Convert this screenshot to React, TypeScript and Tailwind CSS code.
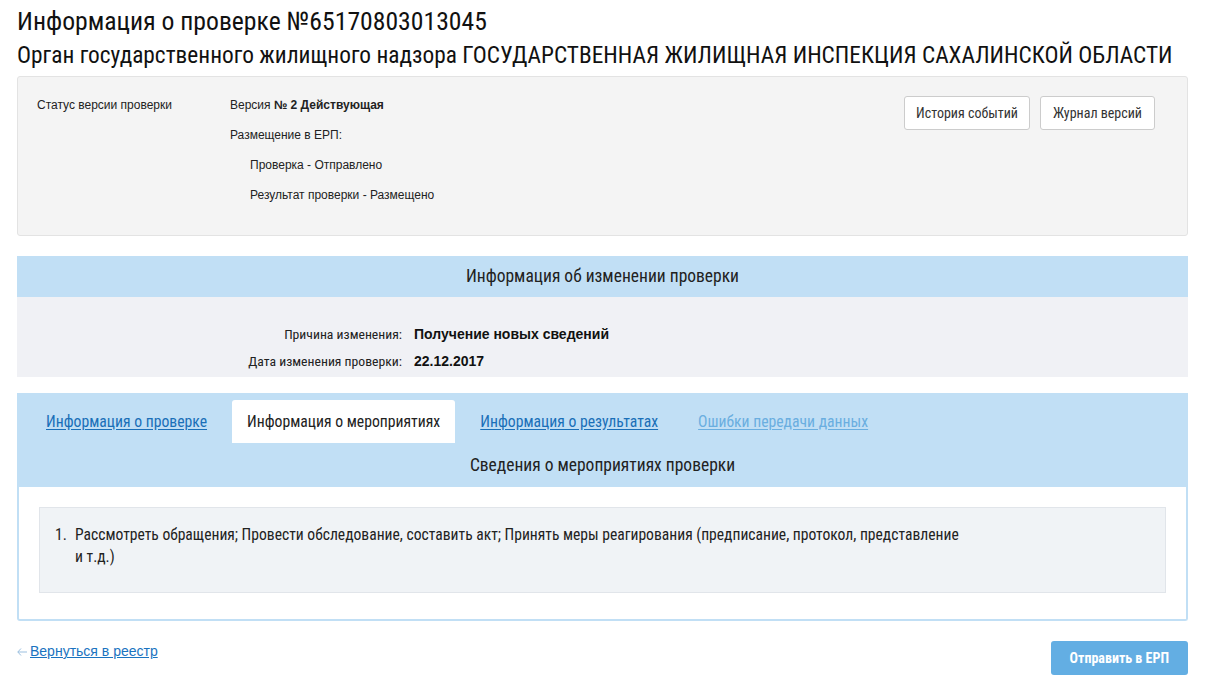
const cond = "font-['Roboto_Condensed','Liberation_Sans_Narrow','DejaVu_Sans_Condensed',Roboto,sans-serif]";
const arial = "font-['Liberation_Sans',Arial,sans-serif]";

function TopBox() {
  return (
    <div className="mx-[17px] flex h-[160px] rounded-[3px] border border-[#e3e3e3] bg-[#f4f4f4] pt-[21px]">
      <div className={`${arial} w-[212px] pl-[19px] text-[12px] leading-[14px] text-[#222]`}>
        Статус версии проверки
      </div>
      <div className={`${arial} flex flex-1 flex-col gap-[16px] text-[12px] leading-[14px] text-[#222]`}>
        <div>
          Версия <b>№ 2 Действующая</b>
        </div>
        <div>Размещение в ЕРП:</div>
        <div className="pl-[20px]">Проверка - Отправлено</div>
        <div className="pl-[20px]">Результат проверки - Размещено</div>
      </div>
      <div className={`${cond} flex items-start gap-[10px] pr-[32px]`}>
        <button className="-mt-[2px] h-[34px] rounded-[3px] border border-[#cccccc] bg-white px-[11px] text-[14px] text-[#333]">
          История событий
        </button>
        <button className="-mt-[2px] h-[34px] rounded-[3px] border border-[#cccccc] bg-white px-[12px] text-[14px] text-[#333]">
          Журнал версий
        </button>
      </div>
    </div>
  );
}

function ChangeInfo() {
  return (
    <div className="mx-[17px] mt-[20px]">
      <div className={`${cond} flex h-[41px] items-center justify-center bg-[#c1dff5] text-[17.5px] text-[#222]`}>
        Информация об изменении проверки
      </div>
      <div className="flex h-[80px] flex-col gap-[11px] bg-[#f0f1f5] pt-[29px]">
        <div className="flex items-center text-[14px] leading-[16px]">
          <span className={`${cond} w-[385px] text-right text-[13.7px] text-[#222]`}>Причина изменения:</span>
          <span className={`${arial} pl-[12px] font-bold text-[#111]`}>Получение новых сведений</span>
        </div>
        <div className="flex items-center text-[14px] leading-[16px]">
          <span className={`${cond} w-[385px] text-right text-[13.7px] text-[#222]`}>Дата изменения проверки:</span>
          <span className={`${arial} pl-[12px] font-bold text-[#111]`}>22.12.2017</span>
        </div>
      </div>
    </div>
  );
}

function Tabs() {
  return (
    <div className="mx-[17px] mt-[16px]">
      <div className={`${cond} bg-[#c1dff5] pt-[7px]`}>
        <div className="flex items-center pl-[29px] text-[15.7px]">
          <a className="text-[#1a6fb8] underline underline-offset-2" href="#">
            Информация о проверке
          </a>
          <span className="ml-[25px] flex h-[43px] items-center rounded-t-[3px] bg-white px-[15px] text-[#222]">
            Информация о мероприятиях
          </span>
          <a className="ml-[25px] text-[#1a6fb8] underline underline-offset-2" href="#">
            Информация о результатах
          </a>
          <a className="ml-[40px] text-[#6aaee0] underline underline-offset-2" href="#">
            Ошибки передачи данных
          </a>
        </div>
        <div className="flex h-[44px] items-center justify-center text-[17.5px] text-[#222]">
          Сведения о мероприятиях проверки
        </div>
      </div>
      <div className="rounded-b-[3px] border-2 border-t-0 border-[#c1dff5] bg-white px-[20px] pt-[20px] pb-[26px]">
        <div className={`${cond} h-[86px] border border-[#e1e5ea] bg-[#f0f3f6] pl-[15px] pt-[16px] text-[15.6px] leading-[22px] text-[#222]`}>
          <div className="flex">
            <span className="w-[20px] shrink-0">1.</span>
            <span className="max-w-[893px]">
              Рассмотреть обращения; Провести обследование, составить акт; Принять меры реагирования (предписание, протокол, представление и т.д.)
            </span>
          </div>
        </div>
      </div>
    </div>
  );
}

export default function App() {
  return (
    <div className="min-h-[686px] w-[1205px] bg-white pb-[10px]">
      <div className={`${cond} px-[17px] pt-[6px] text-[#111]`}>
        <h1 className="text-[25.7px] leading-[30px]">Информация о проверке №65170803013045</h1>
        <h2 className="mt-[4px] text-[23.35px] leading-[30px]">
          Орган государственного жилищного надзора ГОСУДАРСТВЕННАЯ ЖИЛИЩНАЯ ИНСПЕКЦИЯ САХАЛИНСКОЙ ОБЛАСТИ
        </h2>
      </div>
      <div className="mt-[6px]">
        <TopBox />
      </div>
      <ChangeInfo />
      <Tabs />
      <div className="mx-[17px] mt-[20px] flex items-start justify-between">
        <a href="#" className={`${arial} mt-[2px] flex items-center text-[14px] leading-[16px] text-[#1a73c0]`}>
          <svg width="10" height="8" viewBox="0 0 10 8" className="mr-[3px] mt-[1px]">
            <path d="M4 0.5 L0.8 4 L4 7.5 M0.8 4 H10" fill="none" stroke="#9bbfdf" strokeWidth="1" />
          </svg>
          <span className="underline">Вернуться в реестр</span>
        </a>
        <button className={`${cond} h-[34px] rounded-[3px] bg-[#63aee3] px-[19px] text-[14px] font-bold text-white`}>
          Отправить в ЕРП
        </button>
      </div>
    </div>
  );
}
